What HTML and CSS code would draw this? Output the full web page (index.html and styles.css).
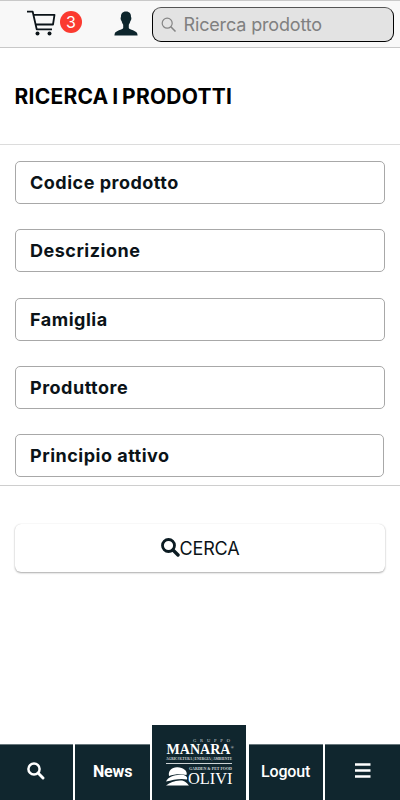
FILE: index.html
```html
<!DOCTYPE html>
<html lang="it">
<head>
<meta charset="utf-8">
<meta name="viewport" content="width=device-width, initial-scale=1">
<title>Ricerca i prodotti</title>
<link rel="stylesheet" href="styles.css">
</head>
<body>
<header class="topbar">
  <a class="cart" aria-label="Carrello">
    <svg width="30" height="26" viewBox="0 0 30 26" fill="none" stroke="#0b1318" stroke-width="1.800" stroke-linejoin="round">
      <path d="M0 1.700H5.700L9.700 19.300H25M6.500 4.800H27.500L26 14.500H9"/>
      <circle cx="10.500" cy="23.500" r="2" fill="#0b1318" stroke="none"/><circle cx="22.500" cy="23.500" r="2" fill="#0b1318" stroke="none"/>
    </svg>
    <span class="badge">3</span>
  </a>
  <svg class="user" width="24" height="25" viewBox="0 0 24 25" fill="#0d252c"><path d="M12 .5C8.300.5 6.800 2.800 7 6.100C6.200 6.500 6.700 9.600 7.600 10C8 12 8.700 13 9.200 13.700V17C8.500 18.800 1.500 19.500.7 22.700L.4 24.500H23.600L23.300 22.700C22.500 19.500 15.500 18.800 14.800 17V13.700C15.300 13 16 12 16.400 10C17.300 9.600 17.800 6.500 17 6.100C17.200 2.800 15.700.5 12 .5Z"/></svg>
  <div class="search">
    <svg width="16" height="16" viewBox="0 0 16 16" fill="none" stroke="#858585" stroke-width="1.200"><circle cx="6.200" cy="6.200" r="5"/><path d="M9.800 9.800L14.500 14.500" stroke-width="1.600"/></svg>
    <span>Ricerca prodotto</span>
  </div>
</header>
<main>
  <h1>RICERCA I PRODOTTI</h1>
  <form class="fields">
    <div class="field"><span>Codice prodotto</span></div>
    <div class="field"><span>Descrizione</span></div>
    <div class="field"><span>Famiglia</span></div>
    <div class="field"><span>Produttore</span></div>
    <div class="field last"><span>Principio attivo</span></div>
  </form>
  <div class="submit"><svg width="19" height="19" viewBox="0 0 19 19" fill="none" stroke="#0b1b22"><circle cx="7.500" cy="7.500" r="6" stroke-width="2.800"/><path d="M12 12L17 17" stroke-width="3.400" stroke-linecap="round"/></svg><span>CERCA</span></div>
</main>
<nav class="tabs">
  <a class="tab"><svg width="18" height="18" viewBox="0 0 18 18" fill="none" stroke="#fff"><circle cx="7" cy="7" r="5.600" stroke-width="2.500"/><path d="M11.300 11.300L16 16" stroke-width="2.900" stroke-linecap="round"/></svg></a>
  <a class="tab news"><span>News</span></a>
  <a class="brand">
    <svg width="94" height="75" viewBox="0 0 94 75" fill="#fff">
      <g font-family="Liberation Serif, serif">
        <text x="41" y="17" font-size="4.600" textLength="37" fill="#d5dbdd">GRUPPO</text>
        <text x="14.500" y="29.300" font-size="13.800" font-weight="bold" textLength="64" lengthAdjust="spacingAndGlyphs">MANARA</text>
        <text x="78.700" y="24" font-size="4">®</text>
        <text x="14" y="34.700" font-size="3.500" font-weight="bold" textLength="66" lengthAdjust="spacingAndGlyphs" fill="#d5dbdd">AGRICOLTURA | ENERGIA | AMBIENTE</text>
        <text x="37" y="44.800" font-size="4" font-weight="bold" textLength="43" lengthAdjust="spacingAndGlyphs" fill="#d5dbdd">GARDEN &amp; PET FOOD</text>
        <text x="36" y="58.500" font-size="16" textLength="44.500" lengthAdjust="spacingAndGlyphs">OLIVI</text>
      </g>
      <path d="M14 38.500H80" stroke="#ccd3d5"/>
      <path d="M17 51C16 45.500 19.500 42.500 25 42.200C31 42 36 46 34.500 50C29 48.500 22 49 17 51Z"/>
      <path d="M14 56.500C16 52 22 50 28 49.800C33 49.700 36 51.500 35 54.500C28 53 21 55 14 56.500Z"/>
      <path d="M14 60.500C18 57.500 22 55.700 28 55.400C33 55.200 35 58 37 60.500Z"/>
    </svg>
  </a>
  <a class="tab logout"><span>Logout</span></a>
  <a class="tab"><svg class="menu" width="16" height="15" viewBox="0 0 16 15"><path d="M0 1.500H15.500M0 7.500H15.500M0 13.500H15.500" stroke="#fff" stroke-width="2.400"/></svg></a>
</nav>
</body>
</html>
```
FILE: styles.css
```css
* { box-sizing: border-box; }
body {
  margin: 0;
  height: 800px;
  display: flex;
  flex-direction: column;
  overflow: hidden;
  background: #fff;
  color: #0b1318;
  font-family: Inter, "Liberation Sans", sans-serif;
}
svg { display: block; flex: none; }
.topbar {
  display: flex;
  align-items: flex-start;
  height: 48px;
  padding: 6px 6px 0 27px;
  border-top: 1px solid #c9c9c9;
  border-bottom: 1px solid #c8c8c8;
  background: #f8f8f8;
}
.cart { display: flex; width: 87px; padding-top: 3px; }
.badge {
  width: 22px;
  height: 22px;
  margin: 1px 0 0 3px;
  border-radius: 50%;
  background: #fb3a30;
  color: #fff;
  font-size: 16px;
  line-height: 22px;
  text-align: center;
}
.user { margin-top: 4px; }
.search {
  display: flex;
  align-items: center;
  flex: 1;
  height: 35px;
  margin-left: 14px;
  padding-left: 8px;
  border: 1px solid #000;
  border-top-color: #555;
  border-radius: 9px;
  background: #e3e3e3;
  color: #808080;
  font-size: 18px;
}
.search span { margin-left: 6.500px; letter-spacing: -0.150px; }
main { flex: 1; }
h1 {
  display: flex;
  align-items: center;
  height: 97px;
  margin: 0;
  padding-left: 14.500px;
  border-bottom: 1px solid #dcdcdc;
  color: #000;
  font-size: 21px;
  font-weight: 650;
  letter-spacing: 0.230px;
  word-spacing: -1.500px;
}
.fields {
  display: grid;
  grid-auto-rows: 43px;
  row-gap: 25.300px;
  height: 341px;
  padding: 16px 15px 0;
  border-bottom: 1px solid #cecece;
}
.field {
  display: flex;
  align-items: center;
  padding-left: 14px;
  border: 1px solid #a8a8a8;
  border-radius: 5px;
  font-size: 18px;
  font-weight: 650;
  letter-spacing: 0.500px;
}
.last { margin-right: 1px; }
.submit {
  display: flex;
  align-items: center;
  justify-content: center;
  height: 48px;
  margin: 38px 15px 0;
  border-radius: 6px;
  box-shadow: 0 1px 2px #aaa, 0 0 1px #ddd;
  font-size: 18px;
}
.submit svg { margin-top: -2px; }
.submit span { letter-spacing: -0.200px; }
.tabs {
  display: grid;
  grid-template-columns: 73px 74.500px 94px 74px 75px;
  justify-content: space-between;
  align-items: end;
  height: 75px;
}
.tab, .brand { display: flex; align-items: center; justify-content: center; background: #10262e; color: #fff; }
.tab { height: 56px; border-top: 1px solid #68777c; font: 700 16px Roboto, sans-serif; }
.tab svg { margin: 0 2px 4px 0; }
.tab .menu { margin-right: 0; }
.tab span { margin-bottom: 2px; letter-spacing: -0.150px; }
.logout { font-weight: 500; }
.brand { height: 75px; }
```
